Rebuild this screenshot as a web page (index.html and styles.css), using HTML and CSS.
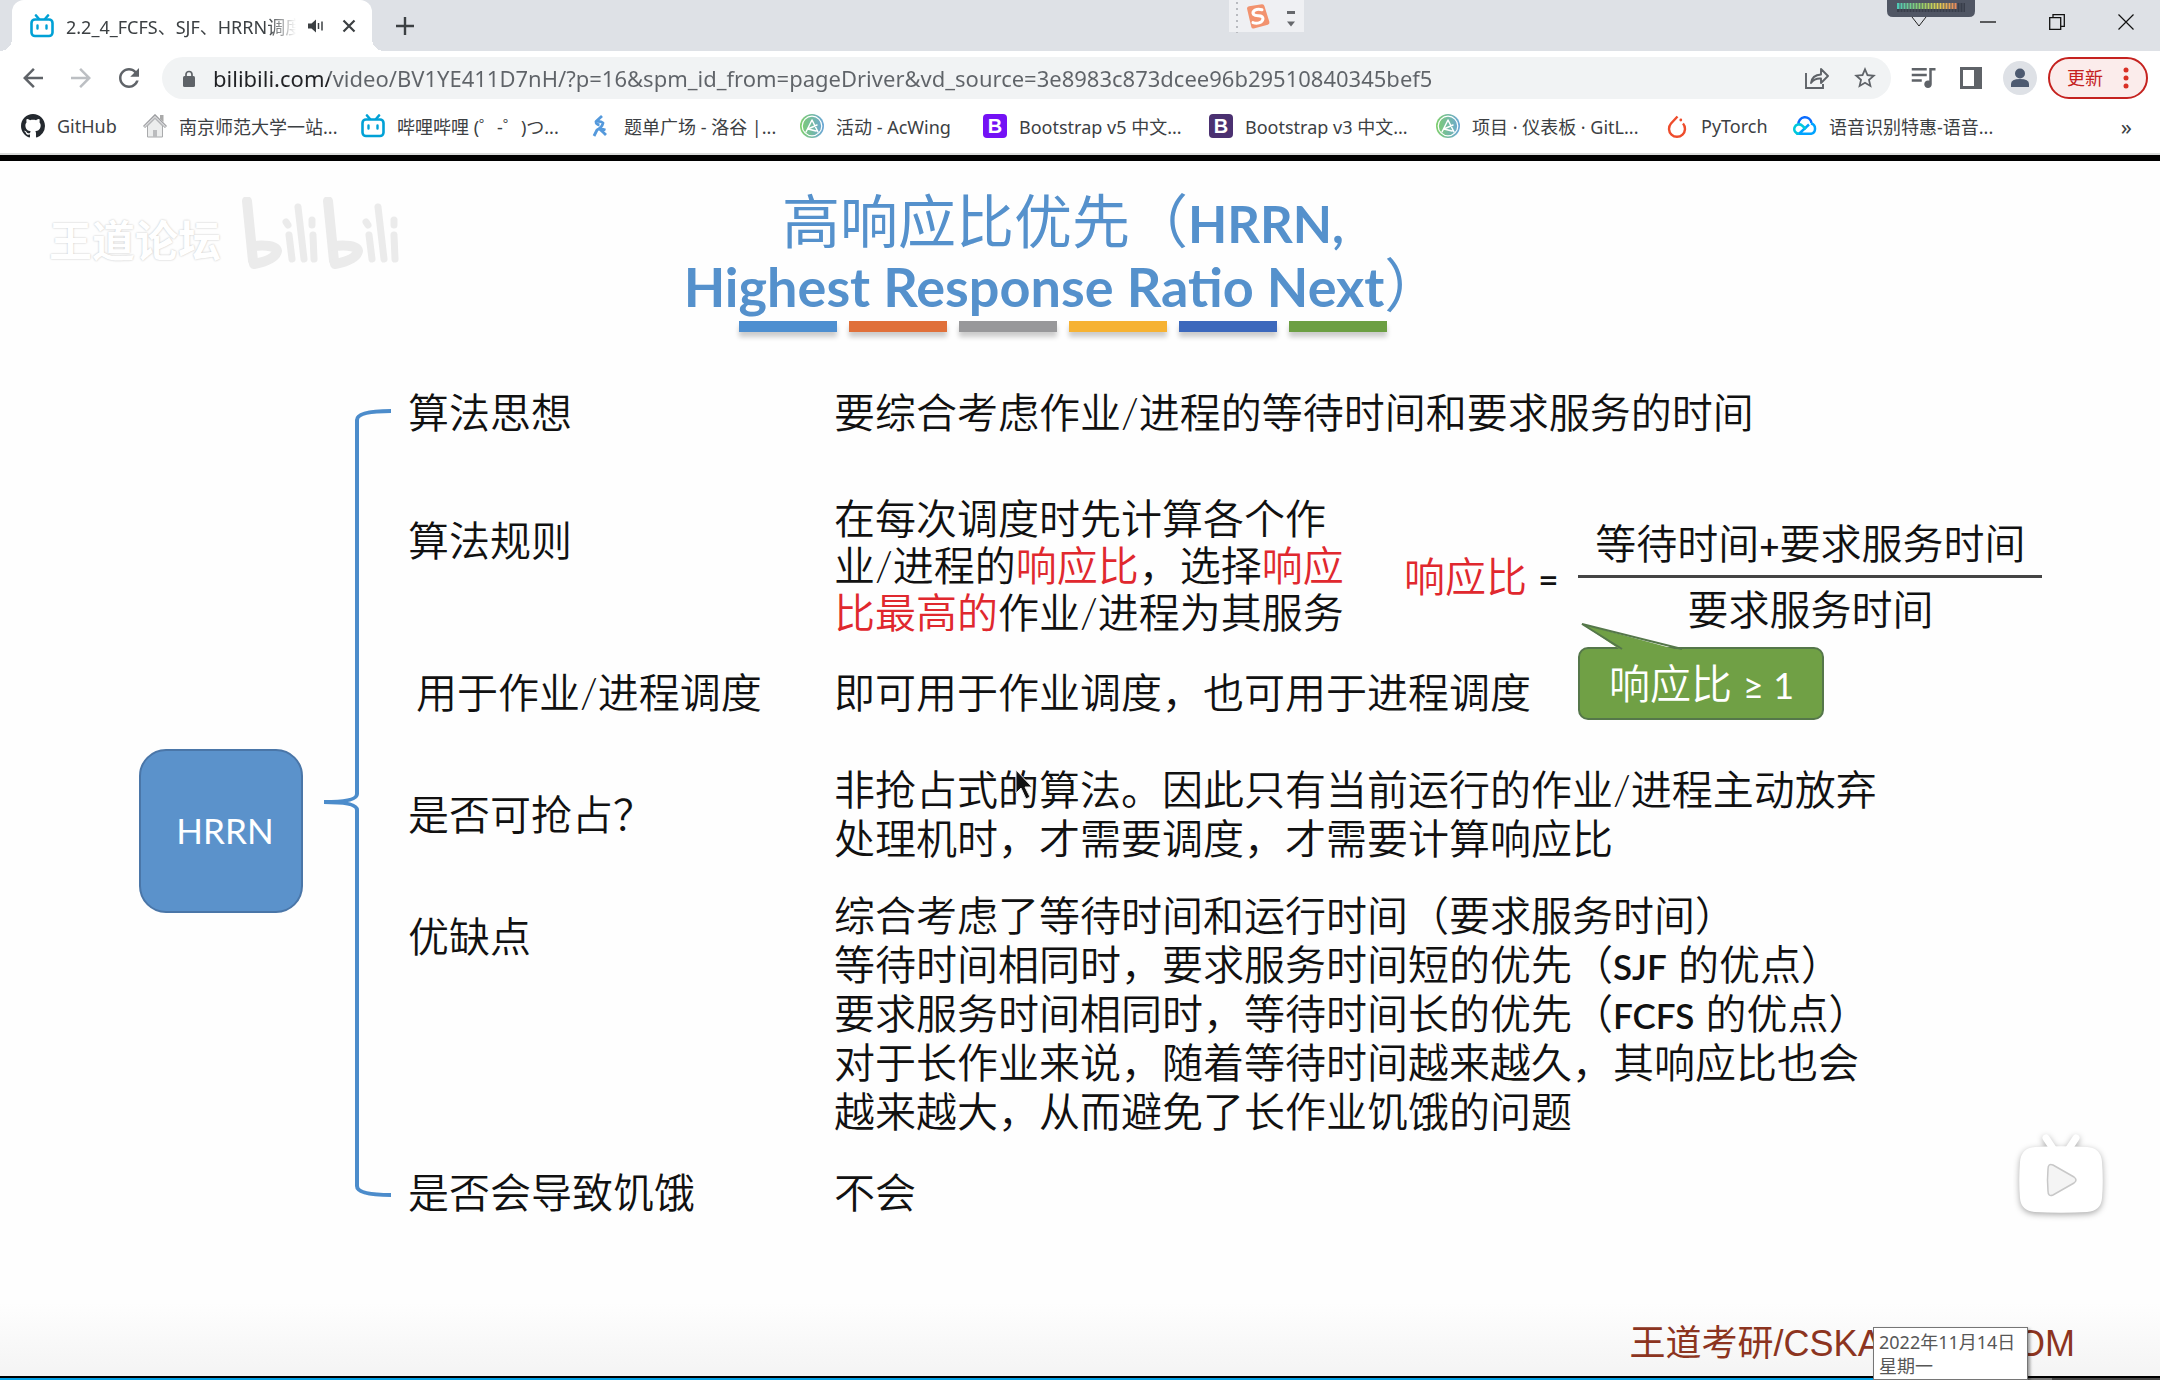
FILE: index.html
```html
<!DOCTYPE html>
<html lang="zh-CN">
<head>
<meta charset="utf-8">
<title>2.2_4_FCFS、SJF、HRRN调度算法</title>
<link rel="stylesheet" href="styles.css">
</head>
<body>
<svg class="defs" aria-hidden="true">
  <symbol id="bili" viewBox="0 0 24 24">
    <path d="M6 1.500l3 3.500M18 1.500l-3 3.500" stroke="#00a1d6" stroke-width="2.600" stroke-linecap="round"/>
    <rect x="1.500" y="5.500" width="21" height="16.500" rx="3.500" fill="#fff" stroke="#00a1d6" stroke-width="2.600"/>
    <path d="M7.500 11.500v3M16.500 11.500v3" stroke="#00a1d6" stroke-width="2.400" stroke-linecap="round"/>
  </symbol>
  <symbol id="acwing" viewBox="0 0 24 24">
    <linearGradient id="acg" x1="0" x2="1"><stop offset="0" stop-color="#7fcf6d"/><stop offset="1" stop-color="#6ba6d8"/></linearGradient>
    <circle cx="12" cy="12" r="12" fill="url(#acg)"/>
    <circle cx="12" cy="12" r="9.800" fill="none" stroke="#fff" stroke-width="1.200"/>
    <path d="M6 18L12 6l6 12M9 14.500l8-3.500M8 15l8 2" fill="none" stroke="#fff" stroke-width="1.500" stroke-linecap="round" stroke-linejoin="round"/>
  </symbol>
</svg>

<header class="browser">
  <div class="tabstrip">
    <div class="tab">
      <svg class="icon24"><use href="#bili"/></svg>
      <span class="tab-title">2.2_4_FCFS、SJF、HRRN调度</span>
      <svg class="speaker" viewBox="0 0 16 16"><path d="M0 5.500h3.500L8 1.500v13L3.500 10.500H0z" fill="#3c4043"/><path d="M10.500 5v6M14 3.500v9" stroke="#3c4043" stroke-width="1.500"/></svg>
      <button class="plain tab-close" aria-label="关闭标签页"><svg viewBox="0 0 14 14"><path d="M1.500 1.500l11 11M12.500 1.500l-11 11" stroke="#3c4043" stroke-width="2.200"/></svg></button>
    </div>
    <button class="plain new-tab" aria-label="新标签页"><svg viewBox="0 0 18 18"><path d="M9 0v18M0 9h18" stroke="#3c4043" stroke-width="2.400"/></svg></button>
    <div class="window-controls">
      <button class="plain" aria-label="搜索标签页"><svg viewBox="0 0 16 16"><path d="M1 3l7 9 7-9" fill="none" stroke="#222" stroke-width="1"/></svg></button>
      <button class="plain" aria-label="最小化"><svg viewBox="0 0 16 16"><path d="M0 8h16" stroke="#111" stroke-width="1.300"/></svg></button>
      <button class="plain" aria-label="还原"><svg viewBox="0 0 16 16"><path d="M.7 3.700h11v11.600h-11zM4 3.500V.7h11.300v11.600H12" fill="none" stroke="#111" stroke-width="1.300"/></svg></button>
      <button class="plain" aria-label="关闭"><svg viewBox="0 0 16 16"><path d="M.5.500l15 15M15.500.500l-15 15" stroke="#111" stroke-width="1.200"/></svg></button>
    </div>
    <div class="ime">
      <svg viewBox="0 0 75 33">
        <path d="M8 2v31" stroke="#b9bbc0" stroke-width="2" stroke-dasharray="2 4"/>
        <path d="M18 8.500q0-2 2-2.300l13-1.900q2-.1 2.400 1.800l5 16q.4 2-1.600 2.600l-14 3.800q-2 .4-2.500-1.600z" fill="#f2936f"/>
        <path d="M33 9.800q-4-1.200-7 .3-3 2-1.500 4.300 1.500 1.400 5 1.300 4.500 0 4.500 3.200-.4 3-4 4-3 .8-6-.3" fill="none" stroke="#fff" stroke-width="3" stroke-linecap="round"/>
        <path d="M58 11h8v3h-8zM58 21.500h8l-4 5z" fill="#66686c"/>
      </svg>
    </div>
    <div class="meter">
      <svg viewBox="0 0 88 17">
        <linearGradient id="mg" x1="0" x2="1"><stop offset="0" stop-color="#4cc9b8"/><stop offset=".4" stop-color="#8fcf6a"/><stop offset=".7" stop-color="#e3cf4f"/><stop offset="1" stop-color="#e8845a"/></linearGradient>
        <path d="M0 0h88v11q0 6-6 6H6q-6 0-6-6z" fill="#505664"/>
        <path d="M10 3h68v9H10z" fill="#393e4b"/>
        <path d="M10 3h60v6H10z" fill="url(#mg)"/>
        <path d="M12.500 7.500h66" stroke="#505664" stroke-width="10" stroke-dasharray="1 2"/>
      </svg>
    </div>
  </div>

  <div class="toolbar">
    <button class="plain nav" aria-label="后退"><svg viewBox="0 0 24 24"><path fill="#5f6368" d="M20 11H7.830l5.590-5.590L12 4l-8 8 8 8 1.410-1.410L7.830 13H20z"/></svg></button>
    <button class="plain nav" aria-label="前进"><svg viewBox="0 0 24 24"><path fill="#bcbfc3" d="M4 11h12.170l-5.590-5.590L12 4l8 8-8 8-1.410-1.410L16.170 13H4z"/></svg></button>
    <button class="plain nav" aria-label="重新加载"><svg viewBox="0 0 24 24"><path fill="#5f6368" d="M17.650 6.350C16.200 4.900 14.210 4 12 4c-4.420 0-7.990 3.580-7.990 8s3.570 8 7.990 8c3.730 0 6.840-2.550 7.730-6h-2.080c-.82 2.330-3.040 4-5.650 4-3.310 0-6-2.690-6-6s2.690-6 6-6c1.660 0 3.140.69 4.220 1.780L13 11h7V4z"/></svg></button>
    <div class="omnibox">
      <svg class="lock" viewBox="0 0 12 17"><path d="M3 7V4.500a3 3 0 0 1 6 0V7" fill="none" stroke="#5f6368" stroke-width="1.700"/><rect y="6" width="12" height="11" rx="1.500" fill="#5f6368"/></svg>
      <input class="url" type="text" aria-label="地址栏" value="bilibili.com/video/BV1YE411D7nH/?p=16&amp;spm_id_from=pageDriver&amp;vd_source=3e8983c873dcee96b29510840345bef5">
      <button class="plain omni-btn" aria-label="分享"><svg viewBox="0 0 24 24"><path d="M1 7v15h17v-4" fill="none" stroke="#5f6368" stroke-width="1.900"/><path d="M6 17q1-8 10-8.500V3l7 7-7 7v-4.500Q9.500 12 6 17z" fill="none" stroke="#5f6368" stroke-width="1.900" stroke-linejoin="round"/></svg></button>
      <button class="plain omni-btn" aria-label="收藏"><svg viewBox="1 1 22 22"><path fill="#5f6368" d="M22 9.240l-7.190-.62L12 2 9.190 8.630 2 9.240l5.460 4.730L5.820 21 12 17.270 18.180 21l-1.630-7.030L22 9.240zM12 15.400l-3.760 2.270 1-4.280-3.320-2.880 4.380-.38L12 6.100l1.710 4.040 4.380.38-3.320 2.880 1 4.280L12 15.400z"/></svg></button>
    </div>
    <button class="plain nav" aria-label="媒体控件"><svg viewBox="0 0 24 24"><path fill="#5f6368" d="M15 4H3v2h12zm0 4.500H3v2h12zM3 15h8v-2H3zM17 4v10.180c-.31-.11-.65-.18-1-.18-1.660 0-3 1.340-3 3s1.340 3 3 3 3-1.340 3-3V6h3V4z"/></svg></button>
    <button class="plain nav" aria-label="侧边栏"><svg viewBox="0 0 30 30"><path fill="#5f6368" fill-rule="evenodd" d="M4 4h22v22H4zM7 7v16h11V7z"/></svg></button>
    <button class="plain avatar" aria-label="用户"><svg viewBox="0 0 34 34"><circle cx="17" cy="17" r="17" fill="#dee1e6"/><circle cx="17" cy="12.500" r="5" fill="#4d5a70"/><path d="M8 26v-3q0-5 9-5t9 5v3z" fill="#4d5a70"/></svg></button>
    <button class="update">更新<svg viewBox="0 0 6 22"><circle cx="3" cy="3" r="2.500"/><circle cx="3" cy="11" r="2.500"/><circle cx="3" cy="19" r="2.500"/></svg></button>
  </div>

  <nav class="bookmarks">
    <a href="#"><svg class="icon24" viewBox="0 0 16 16"><path fill="#24292f" d="M8 0C3.580 0 0 3.580 0 8c0 3.540 2.290 6.530 5.470 7.590.4.070.55-.17.55-.38 0-.19-.01-.82-.01-1.490-2.010.37-2.530-.49-2.690-.94-.09-.23-.48-.94-.82-1.130-.28-.15-.68-.52-.01-.53.63-.01 1.080.58 1.230.82.72 1.210 1.870.87 2.330.66.070-.52.28-.87.51-1.070-1.780-.2-3.640-.89-3.640-3.950 0-.87.31-1.590.82-2.150-.08-.2-.36-1.020.08-2.120 0 0 .67-.21 2.200.82.64-.18 1.320-.27 2-.27s1.360.09 2 .27c1.530-1.040 2.200-.82 2.200-.82.44 1.100.16 1.920.08 2.120.51.56.82 1.270.82 2.150 0 3.070-1.870 3.750-3.650 3.950.29.25.54.73.54 1.480 0 1.070-.01 1.930-.01 2.200 0 .21.15.46.55.38A8.010 8.010 0 0 0 16 8c0-4.420-3.580-8-8-8z"/></svg>GitHub</a>
    <a href="#"><svg class="icon24" viewBox="0 0 24 24"><path d="M4.500 12v11h15V12L12 4.500z" fill="#eceded" stroke="#a9aaac"/><path d="M1 13L12 2l11 11" fill="none" stroke="#9b9c9f" stroke-width="3"/><path d="M1.500 12.800L12 2.500l10.500 10.300" fill="none" stroke="#dcdddf" stroke-width="1.200"/><path d="M17 1h3.500V8L17 5z" fill="#aaa"/><path d="M10 16h4v7h-4z" fill="#bbbcbe"/></svg>南京师范大学一站...</a>
    <a href="#"><svg class="icon24"><use href="#bili"/></svg>哔哩哔哩 (゜-゜)つ...</a>
    <a href="#"><svg class="icon24" viewBox="0 0 24 24"><path d="M14 2L8 7.500q5-.5 7 1.500-1 4.500-6 7l-3 6M8 7.500q0 3 3.500 3.500M11 14l6.500 2M12 15.500q3 2.500 6 5.500" fill="none" stroke="#5499dc" stroke-width="2.800" stroke-linejoin="round"/></svg>题单广场 - 洛谷 |...</a>
    <a href="#"><svg class="icon24"><use href="#acwing"/></svg>活动 - AcWing</a>
    <a href="#"><span class="bs bs5">B</span>Bootstrap v5 中文...</a>
    <a href="#"><span class="bs bs3">B</span>Bootstrap v3 中文...</a>
    <a href="#"><svg class="icon24"><use href="#acwing"/></svg>项目 · 仪表板 · GitL...</a>
    <a href="#"><svg class="icon24" viewBox="0 0 24 24"><path d="M12.500 2.500L6 9.500a8 8 0 1 0 12 0" fill="none" stroke="#ee4c2c" stroke-width="2.400"/><circle cx="15.800" cy="6" r="1.400" fill="#ee4c2c"/></svg>PyTorch</a>
    <a href="#"><svg class="icon24" viewBox="0 0 24 24"><path d="M5.500 10.500a6.500 6.500 0 0 1 13-1.500" fill="none" stroke="#0a6cff" stroke-width="2.500"/><path d="M18 9.500a5.300 5.300 0 0 1 0 10.300H6L16 10.500" fill="none" stroke="#00a3ff" stroke-width="2.500"/><path d="M6 19.800A4.700 4.700 0 1 1 9 11.500l4 3.500" fill="none" stroke="#00c8dc" stroke-width="2.500"/></svg>语音识别特惠-语音...</a>
    <button class="plain more" aria-label="更多书签">»</button>
  </nav>
</header>

<main class="slide">
  <h1>高响应比优先（<span class="latin short">HRRN,</span><br><span class="latin">Highest Response Ratio Next</span>）</h1>
  <div class="bars"><i class="c1"></i><i class="c2"></i><i class="c3"></i><i class="c4"></i><i class="c5"></i><i class="c6"></i></div>

  <div class="diagram">
    <div class="root-node">HRRN</div>
    <svg class="brace" viewBox="0 0 68 790"><path d="M68 3Q34 3 34 12V386Q34 394 1 394Q34 394 34 402V778Q34 787 68 787" fill="none" stroke="#4c8ccb" stroke-width="4"/></svg>
    <dl class="topics">
      <div class="topic"><dt>算法思想</dt><dd>要综合考虑作业/进程的等待时间和要求服务的时间</dd></div>
      <div class="topic gap-xl">
        <dt class="lower">算法规则</dt>
        <dd class="rule">
          <p>在每次调度时先计算各个作<br>业/进程的<em>响应比</em>，选择<em>响应</em><br><em>比最高的</em>作业/进程为其服务</p>
          <div class="formula">
            <span><em>响应比</em> <b>=</b></span>
            <div class="fraction"><span>等待时间<b>+</b>要求服务时间</span><span>要求服务时间</span>
              <div class="callout"><svg viewBox="0 0 104 28"><path d="M2 1L42 28H102z" fill="#70a045"/><path d="M42 26L2 1L102 26" fill="none" stroke="#55774a" stroke-width="2"/></svg>响应比 <span class="small">≥ 1</span></div>
            </div>
          </div>
        </dd>
      </div>
      <div class="topic gap-m"><dt class="inset">用于作业/进程调度</dt><dd>即可用于作业调度，也可用于进程调度</dd></div>
      <div class="topic gap-l"><dt class="middle">是否可抢占？</dt><dd>非抢占式的算法。因此只有当前运行的作业/进程主动放弃<br>处理机时，才需要调度，才需要计算响应比</dd></div>
      <div class="topic gap-s"><dt class="lower">优缺点</dt><dd>综合考虑了等待时间和运行时间（要求服务时间）<br>等待时间相同时，要求服务时间短的优先（<b>SJF</b> 的优点）<br>要求服务时间相同时，等待时间长的优先（<b>FCFS</b> 的优点）<br>对于长作业来说，随着等待时间越来越久，其响应比也会<br>越来越大，从而避免了长作业饥饿的问题</dd></div>
      <div class="topic gap-m"><dt>是否会导致饥饿</dt><dd>不会</dd></div>
    </dl>
  </div>

  <p class="brand">王道考研/CSKAOYAN.COM</p>

  <div class="watermark">
    <span>王道论坛</span>
    <svg viewBox="0 0 160 72" role="img" aria-label="bilibili">
      <g fill="none" stroke="#ebebeb" stroke-linecap="round" stroke-linejoin="round">
        <path d="M8 4l6 60" stroke-width="10"/><path d="M14 49q23-2 24 5-2 9-23 13" stroke-width="10"/>
        <path d="M50 38l3 24M59 10l6 52M74 38l1 24M47 25l2 3M73 23v5" stroke-width="7"/>
        <path d="M89 4l6 60" stroke-width="10"/><path d="M95 49q23-2 24 5-2 9-23 13" stroke-width="10"/>
        <path d="M130 38l3 24M139 10l6 52M155 38l1 24M127 25l2 3M155 23v5" stroke-width="7"/>
      </g>
    </svg>
  </div>
  <svg class="cursor" viewBox="0 0 20 32"><path d="M1 1v23l5-5 5 11 4-2-5-10h7z" fill="#111" stroke="#eee"/></svg>
  <button class="plain play" aria-label="播放">
    <svg viewBox="0 0 96 96"><g class="tv"><path d="M33 12l8 12M63 12l-8 12" stroke="#fff" stroke-width="7" stroke-linecap="round"/><path d="M22 21q26-1.500 52 0 14 1 15 15 1.500 19 0 36-1 13-15 14-26 1.500-52 0-14-1-15-14-1.500-17 0-36 1-14 15-15z" fill="#fff"/></g><path d="M35 43q0-6 5-4l21 12q4 3 0 6L40 69q-5 2-5-4-1-11 0-22z" fill="#f4f4f4" stroke="#c8c8c8" stroke-width="1.500"/></svg>
  </button>
  <div class="date-tip" role="tooltip">2022年11月14日<br>星期一</div>
</main>
<div class="progress"><i class="played"></i><i class="buffered"></i></div>
</body>
</html>
```

FILE: styles.css
```css
* { box-sizing: border-box; }
body {
  margin: 0;
  min-height: 100vh;
  display: flex;
  flex-direction: column;
  font-family: "Noto Sans", "Noto Sans CJK SC", sans-serif;
  font-size: 18px;
  color: #3c4043;
  background: #000;
}
svg { display: block; flex: none; }
.defs { position: absolute; width: 0; height: 0; }
.icon24 { width: 24px; height: 24px; }
.plain {
  border: 0;
  padding: 0;
  background: none;
  display: flex;
  align-items: center;
  justify-content: center;
  flex: none;
}

/* browser chrome */
.browser { background: #fff; border-bottom: 2px solid #dadcdb; }
.tabstrip {
  position: relative;
  display: flex;
  height: 51px;
  padding-left: 12px;
  background: #dee1e6;
}
.tab {
  position: relative;
  display: flex;
  align-items: center;
  width: 360px;
  padding: 0 16px 0 18px;
  background: #fff;
  border-radius: 12px 12px 0 0;
}
.tab::before, .tab::after {
  content: "";
  position: absolute;
  bottom: 0;
  width: 12px;
  height: 12px;
}
.tab::before { left: -12px; background: radial-gradient(circle at 0 0, #dee1e6 12px, #fff 12px); }
.tab::after { right: -12px; background: radial-gradient(circle at 100% 0, #dee1e6 12px, #fff 12px); }
.tab-title {
  flex: 1;
  margin: 0 12px;
  overflow: hidden;
  white-space: nowrap;
  -webkit-mask-image: linear-gradient(90deg, #000 88%, transparent);
  mask-image: linear-gradient(90deg, #000 88%, transparent);
}
.speaker { width: 16px; height: 16px; }
.tab-close { margin-left: 18px; }
.tab-close svg { width: 14px; height: 14px; }
.new-tab { margin-left: 24px; }
.new-tab svg { width: 18px; height: 18px; }
.window-controls { display: flex; height: 44px; margin-left: auto; }
.window-controls button { width: 69px; }
.window-controls svg { width: 16px; height: 16px; }
.ime { position: absolute; right: 856px; top: 0; width: 75px; height: 32px; background: #eff0f3; }
.meter { position: absolute; right: 185px; top: 0; width: 88px; }

.toolbar { display: flex; align-items: center; padding: 6px 12px 2px 9px; }
.nav { width: 48px; height: 42px; }
.nav svg { width: 30px; height: 30px; }
.omnibox {
  display: flex;
  align-items: center;
  flex: 1;
  height: 42px;
  margin: 0 8px 0 9px;
  padding: 0 2px 0 21px;
  background: #f1f3f4;
  border-radius: 21px;
}
.lock { width: 12px; height: 17px; }
.url {
  flex: 1;
  min-width: 0;
  margin-left: 18px;
  padding: 0;
  border: 0;
  outline: 0;
  font: 22px/30px "Noto Sans", "Noto Sans CJK SC", sans-serif;
  color: transparent;
  background: linear-gradient(90deg, #202124 116px, #5f6368 116px);
  -webkit-background-clip: text;
  background-clip: text;
}
.omni-btn { width: 48px; height: 42px; }
.omni-btn svg { width: 24px; height: 24px; }
.avatar { margin: 0 11px 0 8px; }
.avatar svg { width: 34px; height: 34px; }
.update {
  display: flex;
  align-items: center;
  justify-content: space-between;
  width: 100px;
  height: 42px;
  padding: 0 17px;
  border: 2px solid #c5221f;
  border-radius: 21px;
  background: #fbeceb;
  color: #c5221f;
  font: 18px/24px "Noto Sans", "Noto Sans CJK SC", sans-serif;
}
.update svg { width: 6px; height: 22px; fill: #d93025; }

.bookmarks {
  display: grid;
  grid-template-columns: 122px 218px 227px 212px 183px 226px 227px 229px 128px 1fr auto;
  align-items: center;
  height: 52px;
  padding: 0 28px 2px 21px;
}
.bookmarks a {
  display: flex;
  align-items: center;
  gap: 12px;
  white-space: nowrap;
  color: #3c4043;
  text-decoration: none;
}
.bs {
  width: 24px;
  height: 24px;
  border-radius: 4px;
  text-align: center;
  font: bold 20px/24px "Liberation Sans", sans-serif;
  color: #fff;
}
.bs5 { background: #7411f5; }
.bs3 { background: #4b3171; }
.more { font: 22px/24px "Noto Sans", sans-serif; color: #3c4043; }

/* video frame */
.slide {
  position: relative;
  flex: 1;
  display: flex;
  flex-direction: column;
  margin: 6px 0 2px;
  padding-top: 28px;
  background: linear-gradient(#fefefe 94%, #f4f4f4);
  font-family: Lato, "Noto Sans CJK SC", sans-serif;
  font-weight: 350;
  font-size: 41px;
  line-height: 49px;
  color: #111;
  white-space: nowrap;
}
.slide h1 {
  margin: 0;
  padding-right: 34px;
  text-align: center;
  font-size: 58px;
  line-height: 64px;
  font-weight: 400;
  color: #5591cc;
}
.latin { font-size: 54px; line-height: 1; font-weight: 700; }
.short { font-size: 51px; }
.bars { display: flex; justify-content: center; gap: 12px; margin-top: 4px; padding-right: 34px; }
.bars i { width: 98px; height: 11px; box-shadow: 0 5px 5px #0003; }
.c1 { background: #4e8fd0; }
.c2 { background: #e0703a; }
.c3 { background: #98989a; }
.c4 { background: #f6b233; }
.c5 { background: #3c68bc; }
.c6 { background: #6c9f43; }

.diagram { display: flex; align-items: center; margin-top: 56px; padding-left: 139px; }
.root-node {
  display: flex;
  align-items: center;
  justify-content: center;
  width: 164px;
  height: 164px;
  margin-top: 56px;
  padding-left: 8px;
  border: 2px solid #4a76a8;
  border-radius: 27px;
  background: #5b92cb;
  color: #fff;
  font-size: 35px;
  font-weight: 400;
}
.brace { width: 68px; height: 790px; margin: 0 17px 0 20px; }
.topics { flex: 1; margin: 0; }
.topic { display: grid; grid-template-columns: 426px 1fr; align-items: start; }
.topic dd, .topic p { margin: 0; }
.gap-s { margin-top: 28px; }
.gap-m { margin-top: 32px; }
.gap-l { margin-top: 48px; }
.gap-xl { margin-top: 58px; }
.lower { padding-top: 21px; }
.inset { padding-left: 8px; }
.middle { align-self: center; }
.slide em { font-style: normal; color: #e0282e; }
.slide b { font-weight: 600; font-size: 35px; line-height: 1; }
.rule { display: flex; line-height: 47px; }
.rule p { width: 570px; }
.formula { display: flex; align-items: center; align-self: flex-end; gap: 20px; padding-bottom: 2px; }
.fraction { position: relative; width: 464px; text-align: center; line-height: 49px; }
.fraction > span { display: block; padding-bottom: 7px; }
.fraction > span + span { padding: 7px 0 0; border-top: 3px solid #444; }
.callout {
  position: absolute;
  left: 0;
  top: 128px;
  width: 246px;
  height: 73px;
  line-height: 69px;
  border: 2px solid #55774a;
  border-radius: 10px;
  background: #70a045;
  color: #fff;
}
.callout svg { position: absolute; left: 0; top: -26px; width: 104px; height: 28px; }
.small { font-size: 36px; font-weight: 400; }

.brand {
  margin: auto 85px 5px 0;
  text-align: right;
  font: 36px/54px "Liberation Sans", "Noto Sans CJK SC", sans-serif;
  color: #8c3420;
}
.watermark { position: absolute; left: 49px; top: 36px; display: flex; align-items: center; gap: 18px; }
.watermark span {
  padding-top: 14px;
  font-size: 43px;
  font-weight: 700;
  color: #fff;
  text-shadow: 0 0 2px #bbb;
}
.watermark svg { width: 160px; height: 72px; }
.cursor { position: absolute; left: 47%; top: 608px; width: 20px; height: 32px; }
.play { position: absolute; right: 51px; bottom: 154px; }
.play svg { width: 96px; height: 96px; }
.tv { filter: drop-shadow(0 2px 3px #0005); }
.date-tip {
  position: absolute;
  right: 132px;
  bottom: -4px;
  width: 155px;
  height: 53px;
  padding: 2px 5px;
  border: 1px solid #767676;
  box-shadow: 2px 2px 3px #0006;
  background: #fff;
  font: 18px/24px "Noto Sans", "Noto Sans CJK SC", sans-serif;
  color: #575757;
}
.progress { display: flex; height: 2px; background: #444; }
.played { width: 90%; background: #00a1e6; }
.buffered { width: 5%; background: #777; }
```
